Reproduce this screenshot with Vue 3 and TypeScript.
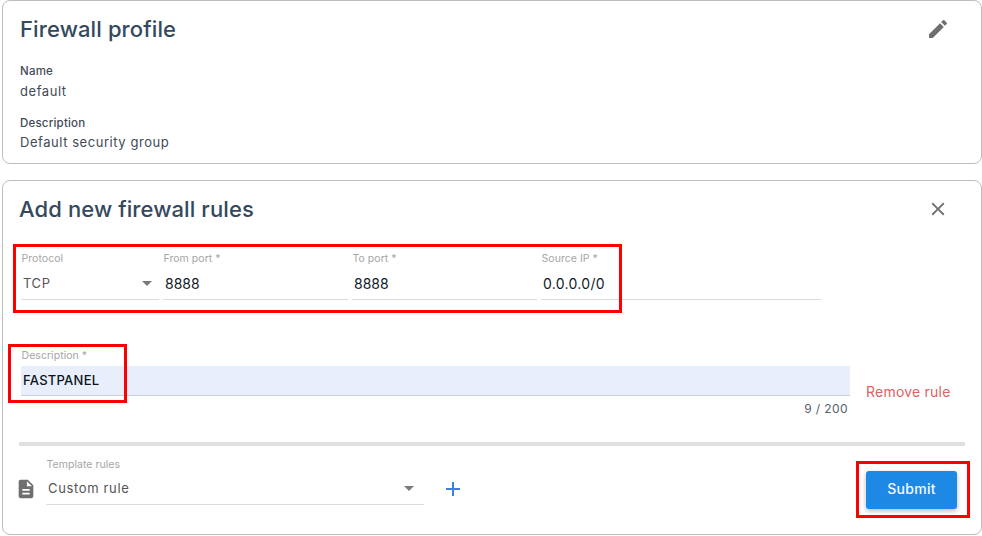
<script setup lang="ts">
const fields = [
  { label: 'Protocol', value: 'TCP', cls: 'protocol', select: true },
  { label: 'From port *', value: '8888', cls: 'port', select: false },
  { label: 'To port *', value: '8888', cls: 'port', select: false },
  { label: 'Source IP *', value: '0.0.0.0/0', cls: 'source', select: false },
]
</script>

<template>
  <div class="page">
    <section class="card first">
      <header class="head">
        <h2>Firewall profile</h2>
        <svg class="edit" viewBox="0 0 24 24" width="24" height="24"><path d="M3 17.25V21h3.75L17.81 9.94l-3.75-3.75L3 17.25zM20.71 7.04a1 1 0 0 0 0-1.41l-2.34-2.34a1 1 0 0 0-1.41 0l-1.83 1.83 3.75 3.75 1.83-1.83z" /></svg>
      </header>
      <dl class="info">
        <dt>Name</dt>
        <dd>default</dd>
        <dt class="second">Description</dt>
        <dd class="second-value">Default security group</dd>
      </dl>
    </section>

    <section class="card form">
      <header class="head">
        <h2>Add new firewall rules</h2>
        <svg class="close" viewBox="0 0 24 24" width="22" height="22"><path d="M19 6.41 17.59 5 12 10.59 6.41 5 5 6.41 10.59 12 5 17.59 6.41 19 12 13.41 17.59 19 19 17.59 13.41 12z" /></svg>
      </header>

      <div class="rule-row">
        <div v-for="f in fields" :key="f.label" class="field" :class="f.cls">
          <span class="label">{{ f.label }}</span>
          <div class="value-line">
            <span class="value">{{ f.value }}</span>
            <i v-if="f.select" class="caret"></i>
          </div>
        </div>
      </div>

      <div class="desc-row">
        <div class="desc-field">
          <span class="label">Description *</span>
          <div class="desc-input">FASTPANEL</div>
          <div class="counter">9 / 200</div>
        </div>
        <a class="remove">Remove rule</a>
      </div>

      <hr class="divider" />

      <div class="foot">
        <svg class="doc" viewBox="0 0 24 24" width="22" height="22"><path d="M14 2H6a2 2 0 0 0-2 2v16a2 2 0 0 0 2 2h12a2 2 0 0 0 2-2V8l-6-6zm2 16H8v-2h8v2zm0-4H8v-2h8v2zm-3-5V3.5L18.5 9H13z" /></svg>
        <div class="template">
          <span class="label">Template rules</span>
          <div class="value-line">
            <span class="value">Custom rule</span>
            <i class="caret"></i>
          </div>
        </div>
        <svg class="plus" viewBox="0 0 24 24" width="24" height="24"><path d="M19 13h-6v6h-2v-6H5v-2h6V5h2v6h6v2z" /></svg>
        <button class="submit" type="button">Submit</button>
      </div>
    </section>

    <i class="mark mark-a"></i>
    <i class="mark mark-b"></i>
    <i class="mark mark-c"></i>
  </div>
</template>

<style>
html, body { margin: 0; background: #fff; }
</style>

<style scoped>
.page {
  position: relative;
  width: 982px;
  height: 536px;
  box-sizing: border-box;
  padding-left: 2px;
  overflow: hidden;
  font-family: Inter, "Liberation Sans", sans-serif;
  color: #3a4652;
}
.card {
  box-sizing: border-box;
  width: 980px;
  border: 1px solid #bdbdbd;
  border-radius: 8px;
  background: #fff;
  padding: 0 16px;
}
.first { height: 164px; }
.form { height: 355px; margin-top: 16px; }
.head {
  display: flex;
  justify-content: space-between;
  align-items: center;
  height: 57px;
  padding-right: 15px;
}
h2 {
  margin: 0 0 1px 1px;
  font-size: 22px;
  font-weight: 500;
  letter-spacing: .12px;
  color: #34495e;
}
.form h2 { margin-left: 0; letter-spacing: .1px; }
.edit { fill: #6f6f6f; margin-bottom: 2px; }
.close { fill: #6f6f6f; margin: 0 1px 1px 0; }
.info { margin: 5px 0 0 1px; }
dt {
  font-size: 11.5px;
  font-weight: 500;
  line-height: 16px;
  color: #3f4a56;
  letter-spacing: .2px;
}
dd {
  margin: 2px 0 0;
  font-size: 13px;
  line-height: 20px;
  letter-spacing: .55px;
  color: #3f4a56;
}
.second { margin-top: 14px; }
.second-value { margin-top: 1px; }
.rule-row {
  display: flex;
  gap: 4px;
  margin: 14px 0 0 2px;
}
.field { display: flex; flex-direction: column; }
.protocol { width: 138px; }
.port { width: 185px; }
.source { width: 280px; }
.label {
  font-size: 10.5px;
  line-height: 14px;
  letter-spacing: .05px;
  color: #a6a6a6;
  padding-left: .5px;
}
.value-line {
  display: flex;
  align-items: center;
  justify-content: space-between;
  height: 28px;
  margin-top: 3px;
  border-bottom: 1px solid #dcdcdc;
  padding: 0 2px 2px;
  font-size: 14px;
  color: #0f1a26;
}
.source .value { letter-spacing: .3px; }
.protocol .value { color: #555; font-size: 13px; letter-spacing: .6px; }
.caret {
  width: 0;
  height: 0;
  margin-right: 5px;
  border-left: 5px solid transparent;
  border-right: 5px solid transparent;
  border-top: 5px solid #7a7a7a;
}
.desc-row {
  display: flex;
  align-items: flex-start;
  margin: 49px 0 0 2px;
}
.desc-field { width: 829px; }
.desc-field .label { display: block; }
.desc-input {
  height: 29px;
  margin-top: 3px;
  padding-left: 2px;
  background: #e8effb;
  border-bottom: 1px solid #c8cfdb;
  font-size: 13px;
  font-weight: 500;
  line-height: 29px;
  letter-spacing: .25px;
  color: #0d1420;
}
.counter {
  margin: 6px 2px 0 0;
  text-align: right;
  font-size: 12px;
  line-height: 14px;
  letter-spacing: .4px;
  color: #55606c;
}
.remove {
  margin: 34px 0 0 16px;
  font-size: 14px;
  line-height: 18px;
  letter-spacing: .22px;
  color: #e06262;
}
.divider {
  width: 946px;
  height: 4px;
  margin: 26px 0 0;
  border: 0;
  background: #e0e0e0;
}
.foot {
  display: flex;
  align-items: flex-start;
  margin-top: 12px;
}
.doc { fill: #6f6f6f; margin: 20px 0 0 -4px; flex: none; }
.template { width: 378px; margin-left: 9px; }
.template .label { display: block; }
.template .value-line { margin-top: 1px; height: 30px; padding-bottom: 1px; }
.template .value { color: #555; font-size: 13px; letter-spacing: .65px; }
.template .caret { margin-right: 8px; }
.plus { fill: #3f7fe0; margin: 19px 0 0 17px; }
.submit {
  width: 91px;
  height: 38px;
  margin: 13px 8px 0 auto;
  padding: 0 0 3px;
  border: 0;
  border-radius: 3px;
  background: #1e88e5;
  color: #f4f9ff;
  font: 500 14px Inter, "Liberation Sans", sans-serif;
  letter-spacing: .3px;
  box-shadow: 0 2px 5px rgba(0,0,0,.28);
}
.mark {
  position: absolute;
  box-sizing: border-box;
  border: 3px solid #f00;
  pointer-events: none;
}
.mark-a { left: 13px; top: 244px; width: 609px; height: 69px; }
.mark-b { left: 8px; top: 344px; width: 119px; height: 59px; }
.mark-c { left: 856px; top: 461px; width: 114px; height: 57px; }
</style>
